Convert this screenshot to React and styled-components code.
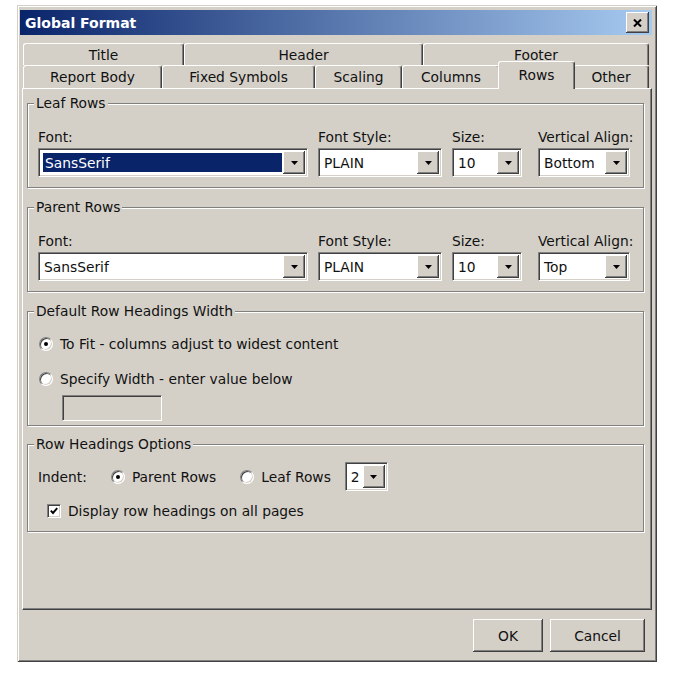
import React from 'react';
import styled, { createGlobalStyle } from 'styled-components';

const face = '#d4d0c8';
const shade = '#808080';
const dark = '#404040';
const navy = '#0a246a';

const GlobalStyle = createGlobalStyle`
  body {
    margin: 0;
    background: #fff;
    font-family: "DejaVu Sans", Tahoma, sans-serif;
  }
`;

const Window = styled.div`
  box-sizing: border-box;
  width: 640px;
  height: 657px;
  margin: 5px 0 0 17px;
  padding: 5px 5px 0 3px;
  background: ${face};
  box-shadow: inset 1px 1px 0 ${face}, inset -1px -1px 0 ${dark},
    inset 2px 2px 0 #fff, inset -2px -2px 0 ${shade};
  font-size: 13.8px;
  color: #111;
  display: flex;
  flex-direction: column;
`;

const TitleBar = styled.div`
  height: 25px;
  display: flex;
  align-items: center;
  justify-content: space-between;
  padding: 0 3px 0 5px;
  background: linear-gradient(to right, ${navy}, #a6caf0);
  color: #fff;
  font-weight: bold;
  font-size: 14px;
`;

const raised = `
  background: ${face};
  box-shadow: inset -1px -1px 0 ${dark}, inset 1px 1px 0 #fff,
    inset -2px -2px 0 ${shade};
`;

const sunken = `
  border: 1px solid;
  border-color: ${shade} #fff #fff ${shade};
  box-shadow: inset 1px 1px 0 ${dark}, inset -1px -1px 0 ${face};
`;

const CloseButton = styled.div`
  width: 23px;
  height: 21px;
  display: flex;
  align-items: center;
  justify-content: center;
  ${raised}
`;

const TabStrip = styled.div`
  width: 626px;
  margin: 8px 0 0 3px;
  display: flex;
  flex-direction: column;
`;

const TabRow = styled.div`
  display: flex;
  height: ${p => p.$h}px;
`;

const Tab = styled.div`
  box-sizing: border-box;
  flex: 0 0 ${p => p.$w + (p.$active ? 4 : 0)}px;
  margin: ${p => (p.$active ? '-4px -2px -1px' : '0')};
  position: ${p => (p.$active ? 'relative' : 'static')};
  z-index: ${p => (p.$active ? 1 : 'auto')};
  background: ${face};
  border-top: 1px solid #fff;
  border-left: 1px solid #fff;
  border-right: 1px solid ${dark};
  box-shadow: inset -1px 0 0 ${shade};
  border-radius: 3px 3px 0 0;
  display: flex;
  align-items: center;
  justify-content: center;
  padding-bottom: ${p => (p.$active ? 2 : 0)}px;
`;

const Panel = styled.div`
  box-sizing: border-box;
  width: 630px;
  height: 522px;
  margin-left: 2px;
  padding: 6px 7px 0 4px;
  border-top: 1px solid #fff;
  border-left: 1px solid #fff;
  border-right: 1px solid ${dark};
  border-bottom: 1px solid ${dark};
  box-shadow: inset -1px -1px 0 ${shade};
`;

const Group = styled.fieldset`
  margin: 0 0 ${p => p.$mb ?? 11}px;
  min-width: 0;
  padding: ${p => p.$pt}px 10px ${p => p.$pb}px 10px;
  border: 1px solid ${shade};
  box-shadow: inset 1px 1px 0 #fff, 1px 1px 0 #fff;
`;

const Legend = styled.legend`
  margin-left: -4px;
  padding: 0 2px;
  line-height: 16px;
  background: ${face};
`;

const FieldRow = styled.div`
  display: flex;
  align-items: flex-end;
`;

const Field = styled.div`
  display: flex;
  flex-direction: column;
  width: ${p => p.$w}px;
  margin-left: ${p => p.$ml || 0}px;
`;

const Label = styled.div`
  line-height: 16px;
  margin-bottom: 3px;
  white-space: nowrap;
`;

const ComboBox = styled.div`
  box-sizing: border-box;
  width: ${p => (p.$w ? `${p.$w}px` : '100%')};
  height: 29px;
  display: flex;
  padding: 2px;
  background: #fff;
  margin-left: ${p => p.$ml || 0}px;
  ${sunken}
`;

const ComboValue = styled.div`
  flex: 1;
  display: flex;
  align-items: center;
  margin: ${p => (p.$selected ? '2px 1px 2px 2px' : '0')};
  padding-left: ${p => (p.$selected ? 2 : 3)}px;
  background: ${p => (p.$selected ? navy : 'transparent')};
  color: ${p => (p.$selected ? '#fff' : '#111')};
  white-space: nowrap;
  overflow: hidden;
`;

const DropButton = styled.div`
  width: 22px;
  display: flex;
  align-items: center;
  justify-content: center;
  ${raised}
`;

const OptionRow = styled.div`
  display: flex;
  align-items: center;
  height: ${p => p.$h || 20}px;
  margin-top: ${p => p.$mt || 0}px;
  margin-left: ${p => p.$ml || 0}px;
`;

const Choice = styled.div`
  display: flex;
  align-items: center;
  gap: ${p => p.$gap || 8}px;
  margin-left: ${p => p.$ml || 0}px;
  white-space: nowrap;
`;

const RadioCircle = styled.span`
  box-sizing: border-box;
  width: 14px;
  height: 14px;
  border-radius: 50%;
  background: #fff;
  display: flex;
  align-items: center;
  justify-content: center;
  ${sunken}
  &::after {
    content: '';
    width: 4px;
    height: 4px;
    border-radius: 50%;
    background: ${p => (p.$checked ? '#000' : 'transparent')};
  }
`;

const CheckBox = styled.span`
  box-sizing: border-box;
  width: 14px;
  height: 14px;
  background: #fff;
  display: flex;
  align-items: center;
  justify-content: center;
  ${sunken}
`;

const WidthInput = styled.div`
  box-sizing: border-box;
  width: 100px;
  height: 26px;
  margin: 6px 0 0 24px;
  background: ${face};
  ${sunken}
`;

const ButtonBar = styled.div`
  display: flex;
  justify-content: flex-end;
  gap: 7px;
  margin-top: 9px;
  padding-right: 7px;
`;

const Button = styled.div`
  box-sizing: border-box;
  width: ${p => p.$w}px;
  height: 33px;
  display: flex;
  align-items: center;
  justify-content: center;
  ${raised}
`;

const Arrow = () => (
  <svg width="7" height="4" viewBox="0 0 7 4">
    <polygon points="0,0 7,0 3.5,4" fill="#000" />
  </svg>
);

const Combo = ({ value, selected, w, ml }) => (
  <ComboBox $w={w} $ml={ml}>
    <ComboValue $selected={selected}>{value}</ComboValue>
    <DropButton>
      <Arrow />
    </DropButton>
  </ComboBox>
);

const Radio = ({ checked, children, ml }) => (
  <Choice $ml={ml} $gap={7}>
    <RadioCircle $checked={checked} />
    <span>{children}</span>
  </Choice>
);

const backTabs = [
  { label: 'Title', w: 161 },
  { label: 'Header', w: 239 },
  { label: 'Footer', w: 226 },
];

const frontTabs = [
  { label: 'Report Body', w: 139 },
  { label: 'Fixed Symbols', w: 153 },
  { label: 'Scaling', w: 87 },
  { label: 'Columns', w: 98 },
  { label: 'Rows', w: 73, active: true },
  { label: 'Other', w: 76 },
];

const RowFormat = ({ title, font, selected, align }) => (
  <Group $pt={18} $pb={10}>
    <Legend>{title}</Legend>
    <FieldRow>
      <Field $w={270}>
        <Label>Font:</Label>
        <Combo value={font} selected={selected} />
      </Field>
      <Field $w={124} $ml={10}>
        <Label>Font Style:</Label>
        <Combo value="PLAIN" />
      </Field>
      <Field $w={70} $ml={10}>
        <Label>Size:</Label>
        <Combo value="10" />
      </Field>
      <Field $w={92} $ml={16}>
        <Label>Vertical Align:</Label>
        <Combo value={align} />
      </Field>
    </FieldRow>
  </Group>
);

export default function App() {
  return (
    <>
      <GlobalStyle />
      <Window>
        <TitleBar>
          <span>Global Format</span>
          <CloseButton>
            <svg width="9" height="8" viewBox="0 0 9 8">
              <path d="M1 0.5 L8 7.5 M8 0.5 L1 7.5" stroke="#000" strokeWidth="2" />
            </svg>
          </CloseButton>
        </TitleBar>

        <TabStrip>
          <TabRow $h={22}>
            {backTabs.map(t => (
              <Tab key={t.label} $w={t.w}>{t.label}</Tab>
            ))}
          </TabRow>
          <TabRow $h={23}>
            {frontTabs.map(t => (
              <Tab key={t.label} $w={t.w} $active={t.active}>{t.label}</Tab>
            ))}
          </TabRow>
        </TabStrip>

        <Panel>
          <RowFormat title="Leaf Rows" font="SansSerif" selected align="Bottom" />
          <RowFormat title="Parent Rows" font="SansSerif" align="Top" />

          <Group $pt={15} $pb={4} $mb={10}>
            <Legend>Default Row Headings Width</Legend>
            <OptionRow $ml={1}>
              <Radio checked>To Fit - columns adjust to widest content</Radio>
            </OptionRow>
            <OptionRow $ml={1} $mt={15}>
              <Radio>Specify Width - enter value below</Radio>
            </OptionRow>
            <WidthInput />
          </Group>

          <Group $pt={10} $pb={10}>
            <Legend>Row Headings Options</Legend>
            <OptionRow $h={29}>
              <span>Indent:</span>
              <Radio checked ml={24}>Parent Rows</Radio>
              <Radio ml={24}>Leaf Rows</Radio>
              <Combo value="2" w={43} ml={14} />
            </OptionRow>
            <OptionRow $ml={9} $mt={10}>
              <Choice $gap={7}>
                <CheckBox>
                  <svg width="8" height="8" viewBox="0 0 8 8">
                    <path d="M0.8 3.6 L3 6 L7.2 1.2" stroke="#000" strokeWidth="1.9" fill="none" />
                  </svg>
                </CheckBox>
                <span>Display row headings on all pages</span>
              </Choice>
            </OptionRow>
          </Group>
        </Panel>

        <ButtonBar>
          <Button $w={70}>OK</Button>
          <Button $w={95}>Cancel</Button>
        </ButtonBar>
      </Window>
    </>
  );
}
